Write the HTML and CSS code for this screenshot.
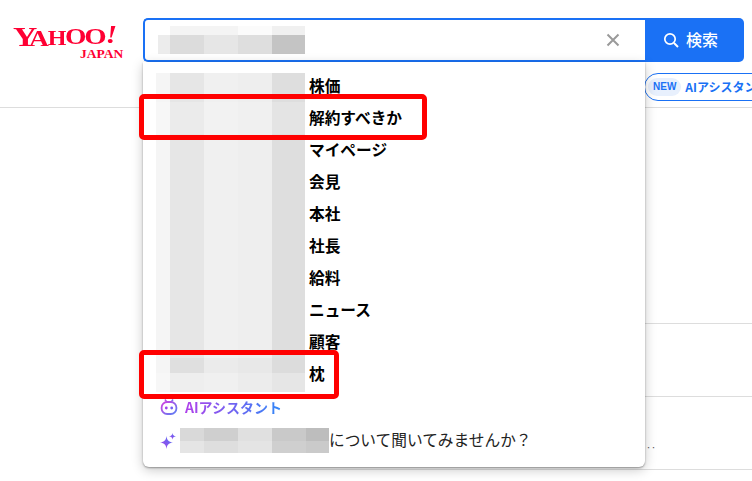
FILE: index.html
```html
<!DOCTYPE html>
<html lang="ja">
<head>
<meta charset="utf-8">
<title>Yahoo! JAPAN</title>
<link rel="stylesheet" href="styles.css">
</head>
<body>
<div class="page">
  <header class="header">
    <div class="top">
      <a class="logo">
        <span class="logo-main"><span class="l1">Y</span><span class="l2">A</span><span class="l3">H</span><span class="l4">O</span><span class="l5">O</span><span class="l6">!</span></span>
        <span class="logo-sub">JAPAN</span>
      </a>
      <form class="search">
        <div class="field">
          <span class="blur blur-query"></span>
          <svg class="clear" width="14" height="14" viewBox="0 0 14 14"><path d="M1.500 1.500l11 11M12.500 1.500l-11 11" stroke="#9a9a9a" stroke-width="2" fill="none"/></svg>
        </div>
        <button class="submit" type="button">
          <svg width="16" height="16" viewBox="0 0 16 16"><circle cx="7" cy="7" r="5.200" stroke="#fff" stroke-width="1.700" fill="none"/><path d="M11 11l4 4" stroke="#fff" stroke-width="1.900" fill="none"/></svg>
          <span class="submit-text">検索</span>
        </button>
      </form>
    </div>
    <div class="tabs">
      <span class="pill"><span class="new">NEW</span><span class="pill-text">AIアシスタント</span></span>
    </div>
  </header>
  <main class="feed">
    <div class="feed-row first"></div>
    <div class="feed-row"></div>
    <div class="feed-row last"><span class="more">‥</span></div>
  </main>

  <section class="popup">
    <ul class="list">
      <li class="item first"><span class="blur col"></span><b>株価</b></li>
      <li class="item"><span class="blur col light"></span><b>解約すべきか</b></li>
      <li class="item"><span class="blur col"></span><b>マイページ</b></li>
      <li class="item"><span class="blur col"></span><b>会見</b></li>
      <li class="item"><span class="blur col"></span><b>本社</b></li>
      <li class="item"><span class="blur col"></span><b>社長</b></li>
      <li class="item"><span class="blur col"></span><b>給料</b></li>
      <li class="item"><span class="blur col"></span><b>ニュース</b></li>
      <li class="item"><span class="blur col"></span><b>顧客</b></li>
      <li class="item"><span class="blur col low"></span><b>枕</b></li>
    </ul>
    <div class="ai-head">
      <svg width="18" height="18" viewBox="0 0 18 18">
        <defs><linearGradient id="g1" x1="0" y1="0" x2="1" y2="1"><stop offset="0" stop-color="#d040e0"/><stop offset="1" stop-color="#5a80f5"/></linearGradient></defs>
        <path d="M5 1.500l1.800 2.600M13 1.500l-1.800 2.600" stroke="url(#g1)" stroke-width="1.600" fill="none"/>
        <rect x="1.600" y="4" width="14.800" height="12" rx="5.600" stroke="url(#g1)" stroke-width="1.800" fill="none"/>
        <circle cx="6.300" cy="10" r="1.400" fill="#a045ea"/><circle cx="11.700" cy="10" r="1.400" fill="#7560f2"/>
      </svg>
      <span class="ai-label">AIアシスタント</span>
    </div>
    <div class="ai-ask">
      <svg class="spark" width="16" height="16" viewBox="0 0 16 16">
        <defs><linearGradient id="g2" x1="0" y1="1" x2="1" y2="0"><stop offset="0" stop-color="#b03ce8"/><stop offset="1" stop-color="#4a78f5"/></linearGradient></defs>
        <path d="M6.500 3C7.100 7.200 8.300 8.700 13 9.500 8.300 10.300 7.100 11.800 6.500 16 5.900 11.800 4.700 10.300 0 9.500 4.700 8.700 5.900 7.200 6.500 3Z" fill="url(#g2)"/>
        <path d="M12.500 0C12.900 2.200 13.500 2.900 16 3.300 13.500 3.700 12.900 4.400 12.500 6.600 12.100 4.400 11.500 3.700 9 3.300 11.500 2.900 12.100 2.200 12.500 0Z" fill="url(#g2)"/>
      </svg>
      <span class="blur blur-ask"></span><span class="ask-text">について聞いてみませんか？</span>
    </div>
  </section>

  <div class="mark mark-a"></div>
  <div class="mark mark-b"></div>
</div>
</body>
</html>
```

FILE: styles.css
```css
* { box-sizing: border-box; }
html, body { margin: 0; padding: 0; background: #fff; }
body { font-family: "Noto Sans CJK JP", "Liberation Sans", sans-serif; color: #111; }
.page { position: relative; width: 752px; height: 481px; overflow: hidden; }

.header { height: 108px; border-bottom: 1px solid #ddd; }
.top { display: flex; padding-top: 18px; }
.logo { width: 143px; height: 44px; padding: 8px 0 0 13px; display: block; color: #f03; }
.logo-main { display: inline-block; font-family: "Liberation Serif", serif; font-weight: 700; line-height: 22px; height: 22px; white-space: nowrap; letter-spacing: -1px; transform: scaleX(1.2); transform-origin: left; }
.l1 { font-size: 28px; }
.l2 { font-size: 23px; margin-left: -6px; }
.l3 { font-size: 20px; position: relative; top: -1px; }
.l4 { font-size: 23px; position: relative; top: -2px; }
.l5 { font-size: 24px; position: relative; top: -2px; margin-left: -1px; }
.l6 { font-size: 25px; font-style: italic; position: relative; top: -3px; }
.logo-sub { display: block; font-family: "Liberation Serif", serif; font-weight: 700; font-size: 13.5px; line-height: 11px; margin: -3px 0 0 67px; }

.search { display: flex; width: 601px; height: 44px; }
.field { width: 502px; height: 44px; border: 2px solid #1a71f5; border-right: 0; border-radius: 5px 0 0 5px; display: flex; align-items: center; justify-content: space-between; padding: 0 25px 0 13px; }
.submit { width: 99px; height: 44px; border: 0; border-radius: 0 5px 5px 0; background: #1a71f5; color: #fff; display: flex; align-items: center; gap: 7px; padding: 0 0 0 18px; font: 500 16px/1 "Noto Sans CJK JP", sans-serif; }
.submit-text { position: relative; top: -1px; }

.blur { display: block; flex: none; }
.blur-query { width: 147px; height: 28px; background:
  linear-gradient(90deg, #ececec 0 12px, #dcdcdc 12px 46px, #e6e6e6 46px 80px, #dedede 80px 114px, #c4c4c4 114px) 0 9px / 100% 19px no-repeat,
  linear-gradient(90deg, #fff 0 12px, #f4f4f4 12px 80px, #fbfbfb 80px 114px, #f0f0f0 114px) 0 0 / 100% 9px no-repeat; }

.tabs { height: 45px; padding: 9px 0 0 644px; white-space: nowrap; }
.pill { display: inline-flex; align-items: center; height: 28px; width: 160px; border: 1.5px solid #1a71f5; border-radius: 14px; padding-left: 3px; gap: 4px; background: #fff; overflow: hidden; }
.new { font: 700 10px/18px "Liberation Sans", sans-serif; color: #1a71f5; background: #e8f0fd; border-radius: 9px; padding: 0 5px; }
.pill-text { font-size: 12px; font-weight: 700; color: #1a71f5; line-height: 18px; }

.feed { margin-left: 190px; }
.feed-row { height: 73px; border-bottom: 1px solid #ddd; position: relative; }
.feed-row.first { height: 216px; }
.more { position: absolute; left: 456px; top: 45px; font-size: 10px; line-height: 12px; color: #555; }

.popup { position: absolute; left: 143px; top: 62px; width: 502px; height: 405px; background: #fff; border-radius: 0 0 6px 6px; box-shadow: 0 1px 2px rgba(0,0,0,.35), 0 3px 12px rgba(0,0,0,.22); }
.list { list-style: none; margin: 0; padding: 8px 0 0 13px; }
.item { display: flex; height: 32px; align-items: stretch; }
.item b { font-size: 15.7px; font-weight: 700; line-height: 32px; margin-left: 4px; color: #000; }
.col { width: 149px; background: linear-gradient(90deg, #f5f5f5 0 14px, #e6e6e6 14px 48px, #f0f0f0 48px 82px, #eeeeee 82px 116px, #dedede 116px); }
.col.light { background: linear-gradient(90deg, #f7f7f7 0 14px, #ebebeb 14px 48px, #f2f2f2 48px 82px, #f0f0f0 82px 116px, #e4e4e4 116px); }
.item.first .col { margin-top: 3px; }
.col.low { height: 34px; background:
  linear-gradient(90deg, #f5f5f5 0 14px, #dfdfdf 14px 48px, #ebebeb 48px 82px, #e8e8e8 82px 116px, #dcdcdc 116px) 0 0 / 100% 15px no-repeat,
  linear-gradient(90deg, #f7f7f7 0 14px, #eeeeee 14px 48px, #f0f0f0 48px 82px, #ececec 82px 116px, #e6e6e6 116px); }

.ai-head { display: flex; align-items: center; height: 24px; margin-top: 5px; padding-left: 17px; gap: 7px; }
.ai-label { font-size: 14px; font-weight: 700; line-height: 22px; background: linear-gradient(90deg, #b040ea, #2f88f8); -webkit-background-clip: text; background-clip: text; color: transparent; }
.ai-ask { display: flex; align-items: center; height: 25px; margin-top: 9px; padding-left: 17px; }
.spark { margin-right: 4px; }
.blur-ask { width: 149px; height: 25px; background:
  linear-gradient(90deg, #d9d9d9 0 24px, #cfcfcf 24px 58px, #e0e0e0 58px 92px, #c9c9c9 92px 126px, #bdbdbd 126px) 0 0 / 100% 13px no-repeat,
  linear-gradient(90deg, #e5e5e5 0 24px, #dedede 24px 58px, #e4e4e4 58px 92px, #cfcfcf 92px 126px, #cacaca 126px); }
.ask-text { font-size: 15.7px; line-height: 23px; height: 25px; color: #222; white-space: nowrap; }

.mark { position: absolute; border: 5px solid #f00; border-radius: 5px; }
.mark-a { left: 139px; top: 94px; width: 288px; height: 46px; }
.mark-b { left: 139px; top: 350px; width: 200px; height: 49px; }
```
